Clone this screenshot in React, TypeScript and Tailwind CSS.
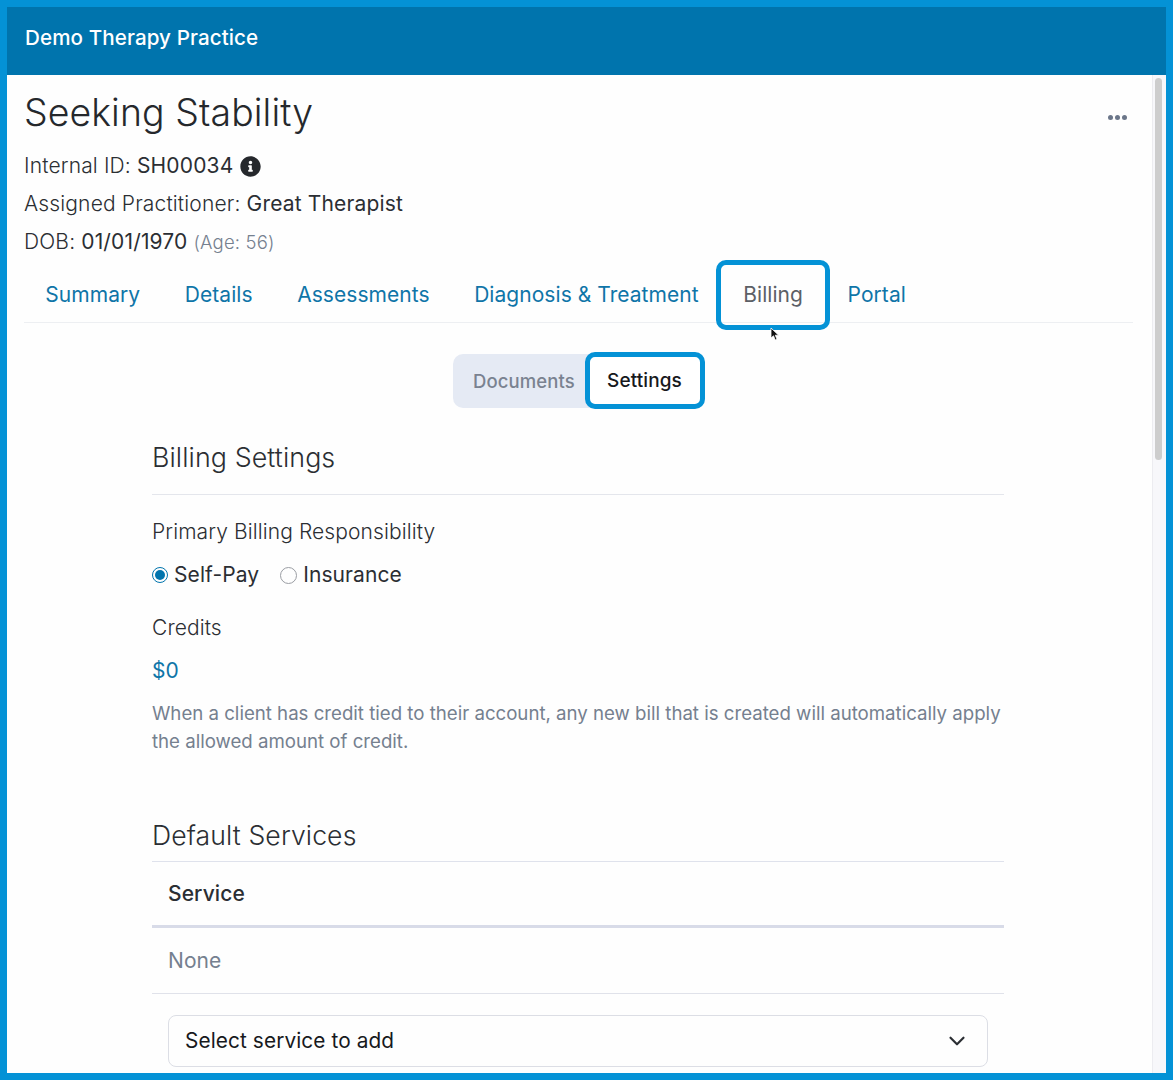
import { ChevronDown } from "lucide-react";

function Tab({ label }: { label: string }) {
  return <a className="px-[22.3px] text-[#0f75a8] leading-[26px]">{label}</a>;
}

function InfoIcon() {
  return (
    <svg viewBox="0 0 512 512" className="w-[21px] h-[21px] ml-[7px] fill-[#25282c]">
      <path d="M256 8C119 8 8 119 8 256s111 248 248 248 248-111 248-248S393 8 256 8zm0 110c23 0 42 19 42 42s-19 42-42 42-42-19-42-42 19-42 42-42zm56 254c0 7-5 12-12 12h-88c-7 0-12-5-12-12v-24c0-7 5-12 12-12h12v-64h-12c-7 0-12-5-12-12v-24c0-7 5-12 12-12h64c7 0 12 5 12 12v100h12c7 0 12 5 12 12v24z" />
    </svg>
  );
}

function Cursor() {
  return (
    <svg viewBox="0 0 10 14" className="absolute left-[49px] -bottom-[33px] w-[10px] h-[14px]">
      <path d="M1 1v10l2.5-2.2L5.2 13l1.8-.8-1.7-4H8.6z" fill="#111" stroke="#fff" strokeWidth="0.8" />
    </svg>
  );
}

export default function App() {
  return (
    <div className="w-[1173px] h-[1080px] overflow-hidden border-[7px] border-[#0492d6] bg-[#fefefe] flex flex-col font-['Inter',sans-serif] tracking-[0.1px] text-[#2b2e33]">
      <header className="h-[68px] shrink-0 bg-[#0074ad] flex items-center pl-[18px] pb-[5px] text-white text-[20.6px] font-medium">
        Demo Therapy Practice
      </header>

      <div className="flex flex-1 min-h-0">
        <main className="flex-1 min-w-0 pl-[17px] pr-[19px] overflow-hidden">
          <div className="flex justify-between items-start">
            <h1 className="text-[37.4px] font-light leading-[44px] mt-[16px] text-[#25282c]">Seeking Stability</h1>
            <div className="flex gap-[2px] mt-[40px] mr-[6px]">
              <span className="w-[5px] h-[5px] rounded-full bg-[#6b7689]" />
              <span className="w-[5px] h-[5px] rounded-full bg-[#6b7689]" />
              <span className="w-[5px] h-[5px] rounded-full bg-[#6b7689]" />
            </div>
          </div>

          <div className="text-[21px] tracking-[0.15px] leading-[38px] mt-[12px] font-light">
            <div className="flex items-center h-[38px]">
              Internal ID:&nbsp;<span className="font-normal">SH00034</span>
              <InfoIcon />
            </div>
            <div className="h-[38px]">
              Assigned Practitioner: <span className="font-normal">Great Therapist</span>
            </div>
            <div className="h-[38px]">
              DOB: <span className="font-normal">01/01/1970</span>{" "}
              <span className="text-[18.5px] text-[#75808f]">(Age: 56)</span>
            </div>
          </div>

          <nav className="flex items-center h-[59px] mt-[3px] pt-[3px] border-b border-[#edeff2] text-[21px] tracking-[0.05px]">
            <div className="flex items-center -ml-px">
              <Tab label="Summary" />
              <Tab label="Details" />
              <Tab label="Assessments" />
              <Tab label="Diagnosis & Treatment" />
              <div className="relative px-[22.3px] text-[#5c6066] leading-[26px]">
                Billing
                <div className="absolute -top-[22px] -bottom-[22px] -left-[5px] -right-[5px] border-[5px] border-[#0492d6] rounded-[10px]" />
                <Cursor />
              </div>
              <Tab label="Portal" />
            </div>
          </nav>

          <div className="flex justify-center mt-[31px]">
            <div className="flex bg-[#e5eaf4] rounded-[10px] h-[54px]">
              <div className="w-[132px] flex items-center justify-center pl-[11px] pt-[2px] text-[18.5px] font-medium text-[#7a8290]">Documents</div>
              <div className="w-[120px] -mt-[2px] -mb-[1px] flex items-center justify-center pt-[2px] text-[19px] font-medium text-[#17191c] bg-white rounded-[10px] border-[5px] border-[#0492d6]">
                Settings
              </div>
            </div>
          </div>

          <section className="w-[852px] ml-[128px]">
            <h2 className="text-[26.8px] font-light leading-[32px] mt-[33px] pb-[21px] border-b border-[#e4e6ec]">Billing Settings</h2>

            <div className="text-[21px] font-light leading-[26px] mt-[24px]">Primary Billing Responsibility</div>
            <div className="flex items-center mt-[16px] text-[21px] leading-[28px]">
              <span className="w-[16px] h-[16px] rounded-full border border-[#0074ad] flex items-center justify-center">
                <span className="w-[10px] h-[10px] rounded-full bg-[#0074ad]" />
              </span>
              <span className="ml-[6px]">Self-Pay</span>
              <span className="w-[17px] h-[17px] rounded-full border border-[#9a9da3] ml-[21px]" />
              <span className="ml-[6px]">Insurance</span>
            </div>

            <div className="text-[21px] font-light leading-[26px] mt-[26px]">Credits</div>
            <div className="text-[21px] text-[#0f75a8] leading-[28px] mt-[16px]">$0</div>
            <p className="text-[18.65px] tracking-normal text-[#75808f] leading-[28px] mt-[14px]">
              When a client has credit tied to their account, any new bill that is created will automatically apply the allowed amount of credit.
            </p>

            <h2 className="text-[26.6px] font-light leading-[32px] mt-[64px] pb-[10px] border-b border-[#dfe2ec]">Default Services</h2>
            <div className="h-[66px] flex items-center px-[16px] text-[21px] font-medium border-b-[3px] border-[#d8dbe8]">Service</div>
            <div className="h-[66px] flex items-center px-[16px] text-[21px] text-[#75808f] border-b border-[#e0e2ea]">None</div>

            <div className="mx-[16px] mt-[21px] h-[52px] rounded-[8px] border border-[#dcdee5] flex items-center justify-between pl-[16px] pr-[17px] text-[20.8px] text-[#17191c]">
              Select service to add
              <ChevronDown className="w-[26px] h-[26px] text-[#2b2e33]" />
            </div>
          </section>
        </main>

        <div className="w-[14px] shrink-0 bg-[#f7f7fa] border-l border-[#ececf0] relative">
          <div className="absolute top-[3px] left-[2px] w-[7px] h-[382px] rounded-full bg-[#cdcdcd]" />
        </div>
      </div>
    </div>
  );
}
